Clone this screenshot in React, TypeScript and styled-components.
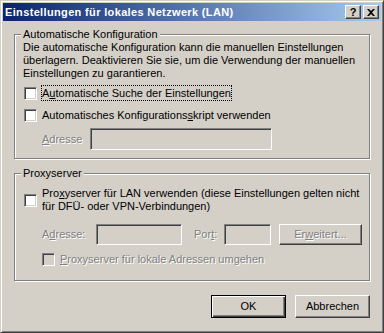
import React from "react";
import styled, { createGlobalStyle } from "styled-components";

const GlobalStyle = createGlobalStyle`
  html, body {
    margin: 0;
    padding: 0;
    background: #d4d0c8;
  }
  body {
    font-family: "Liberation Sans", Arial, sans-serif;
    font-size: 11px;
    color: #000;
  }
`;

const Window = styled.div`
  box-sizing: border-box;
  width: 384px;
  height: 333px;
  padding: 2px;
  background: #d4d0c8;
  border: 1px solid;
  border-color: #d4d0c8 #404040 #404040 #d4d0c8;
  box-shadow: inset 1px 1px 0 #fff, inset -1px -1px 0 #808080;
  display: flex;
  flex-direction: column;
`;

const TitleBar = styled.div`
  height: 18px;
  flex-shrink: 0;
  display: flex;
  align-items: center;
  justify-content: space-between;
  padding: 0 2px 0 2px;
  background: linear-gradient(to right, #0a246a, #a6caf0);
`;

const Title = styled.span`
  color: #fff;
  font-weight: bold;
  font-size: 11px;
  letter-spacing: 0.35px;
  line-height: 13px;
`;

const TitleButtons = styled.div`
  display: flex;
  gap: 2px;
`;

const CaptionButton = styled.div`
  box-sizing: border-box;
  width: 16px;
  height: 14px;
  background: #d4d0c8;
  border-style: solid;
  border-width: 1px;
  border-color: #fff #404040 #404040 #fff;
  box-shadow: inset -1px -1px 0 #808080;
  display: flex;
  align-items: center;
  justify-content: center;
  font-weight: bold;
  font-size: 11px;
  line-height: 11px;
  color: #000;
`;

const Body = styled.div`
  flex: 1;
  display: flex;
  flex-direction: column;
  padding: 7px 11px 0 11px;
`;

const Group = styled.fieldset<{ $gap?: number; $pb: number }>`
  margin: ${(p) => p.$gap ?? 0}px 0 0 0;
  padding: 0 8px ${(p) => p.$pb}px 8px;
  border: 1px solid #808080;
  box-shadow: 1px 1px 0 #fff, inset 1px 1px 0 #fff;
  min-inline-size: 0;
  display: flex;
  flex-direction: column;
`;

const Legend = styled.legend`
  padding: 0 2px;
  margin-left: -2px;
  line-height: 13px;
  background: #d4d0c8;
`;

const Text = styled.div`
  line-height: 13px;
`;

const CheckRow = styled.div<{ $top: number; $indent?: number }>`
  display: flex;
  align-items: center;
  margin-top: ${(p) => p.$top}px;
  padding-left: ${(p) => p.$indent ?? 1}px;
`;

const Box = styled.span<{ $disabled?: boolean }>`
  box-sizing: border-box;
  width: 13px;
  height: 13px;
  flex-shrink: 0;
  border: 1px solid;
  border-color: #808080 #fff #fff #808080;
  box-shadow: inset 1px 1px 0 #404040, inset -1px -1px 0 #d4d0c8;
  background: ${(p) => (p.$disabled ? "#d4d0c8" : "#fff")};
`;

const Label = styled.span<{ $focus?: boolean; $disabled?: boolean }>`
  margin-left: 4px;
  padding: 0;
  line-height: 14px;
  border: 1px ${(p) => (p.$focus ? "dotted #000" : "solid transparent")};
  color: ${(p) => (p.$disabled ? "#808080" : "#000")};
  text-shadow: ${(p) => (p.$disabled ? "1px 1px 0 #fff" : "none")};
`;

const MultiLabel = styled.span`
  margin-left: 5px;
  line-height: 13px;
`;

const FieldRow = styled.div<{ $top: number }>`
  display: flex;
  align-items: center;
  margin-top: ${(p) => p.$top}px;
  padding-left: 19px;
`;

const FieldLabel = styled.span<{ $width: number; $left?: number }>`
  width: ${(p) => p.$width}px;
  margin-left: ${(p) => p.$left ?? 0}px;
  flex-shrink: 0;
  color: #808080;
  text-shadow: 1px 1px 0 #fff;
  line-height: 13px;
`;

const Input = styled.div<{ $width: number; $height: number }>`
  box-sizing: border-box;
  width: ${(p) => p.$width}px;
  height: ${(p) => p.$height}px;
  flex-shrink: 0;
  background: #d4d0c8;
  border: 1px solid;
  border-color: #808080 #fff #fff #808080;
  box-shadow: inset 1px 1px 0 #404040, inset -1px -1px 0 #d4d0c8;
`;

const Button = styled.div<{
  $default?: boolean;
  $disabled?: boolean;
  $width: number;
  $height: number;
  $left?: number;
}>`
  box-sizing: border-box;
  width: ${(p) => p.$width}px;
  height: ${(p) => p.$height}px;
  margin-left: ${(p) => p.$left ?? 0}px;
  flex-shrink: 0;
  display: flex;
  align-items: center;
  justify-content: center;
  background: #d4d0c8;
  border: 1px solid;
  border-color: ${(p) => (p.$default ? "#000" : "#fff #404040 #404040 #fff")};
  box-shadow: ${(p) =>
    p.$default
      ? "inset 1px 1px 0 #fff, inset -1px -1px 0 #404040, inset -2px -2px 0 #808080"
      : "inset -1px -1px 0 #808080"};
  color: ${(p) => (p.$disabled ? "#808080" : "#000")};
  text-shadow: ${(p) => (p.$disabled ? "1px 1px 0 #fff" : "none")};
  line-height: 13px;
`;

const Buttons = styled.div`
  display: flex;
  justify-content: flex-end;
  gap: 9px;
  margin-top: 14px;
`;

function CloseGlyph() {
  return (
    <svg width="8" height="7" viewBox="0 0 8 7">
      <path d="M0 0h2l2 2 2-2h2L5 3.5 8 7H6L4 5 2 7H0l3-3.5z" fill="#000" />
    </svg>
  );
}

export default function App() {
  return (
    <>
      <GlobalStyle />
      <Window>
        <TitleBar>
          <Title>Einstellungen für lokales Netzwerk (LAN)</Title>
          <TitleButtons>
            <CaptionButton>?</CaptionButton>
            <CaptionButton>
              <CloseGlyph />
            </CaptionButton>
          </TitleButtons>
        </TitleBar>
        <Body>
          <Group $pb={8}>
            <Legend>Automatische Konfiguration</Legend>
            <Text>
              Die automatische Konfiguration kann die manuellen Einstellungen
              <br />
              überlagern. Deaktivieren Sie sie, um die Verwendung der manuellen
              <br />
              Einstellungen zu garantieren.
            </Text>
            <CheckRow $top={5}>
              <Box />
              <Label $focus>
                A<u>u</u>tomatische Suche der Einstellungen
              </Label>
            </CheckRow>
            <CheckRow $top={6}>
              <Box />
              <Label>
                Automatisches Konfigurations<u>s</u>kript verwenden
              </Label>
            </CheckRow>
            <FieldRow $top={5}>
              <FieldLabel $width={48}>
                <u>A</u>dresse
              </FieldLabel>
              <Input $width={182} $height={22} />
            </FieldRow>
          </Group>
          <Group $gap={8} $pb={13}>
            <Legend>Proxyserver</Legend>
            <CheckRow $top={7}>
              <Box />
              <MultiLabel>
                Pro<u>x</u>yserver für LAN verwenden (diese Einstellungen gelten nicht
                <br />
                für DFÜ- oder VPN-Verbindungen)
              </MultiLabel>
            </CheckRow>
            <FieldRow $top={11}>
              <FieldLabel $width={54}>
                A<u>d</u>resse:
              </FieldLabel>
              <Input $width={86} $height={21} />
              <FieldLabel $width={30} $left={12}>
                Por<u>t</u>:
              </FieldLabel>
              <Input $width={47} $height={21} />
              <Button $disabled $width={83} $height={21} $left={8}>
                <span>
                  Er<u>w</u>eitert...
                </span>
              </Button>
            </FieldRow>
            <CheckRow $top={6} $indent={19}>
              <Box $disabled />
              <Label $disabled>
                <u>P</u>roxyserver für lokale Adressen umgehen
              </Label>
            </CheckRow>
          </Group>
          <Buttons>
            <Button $default $width={75} $height={23}>
              OK
            </Button>
            <Button $width={75} $height={23}>
              Abbrechen
            </Button>
          </Buttons>
        </Body>
      </Window>
    </>
  );
}
